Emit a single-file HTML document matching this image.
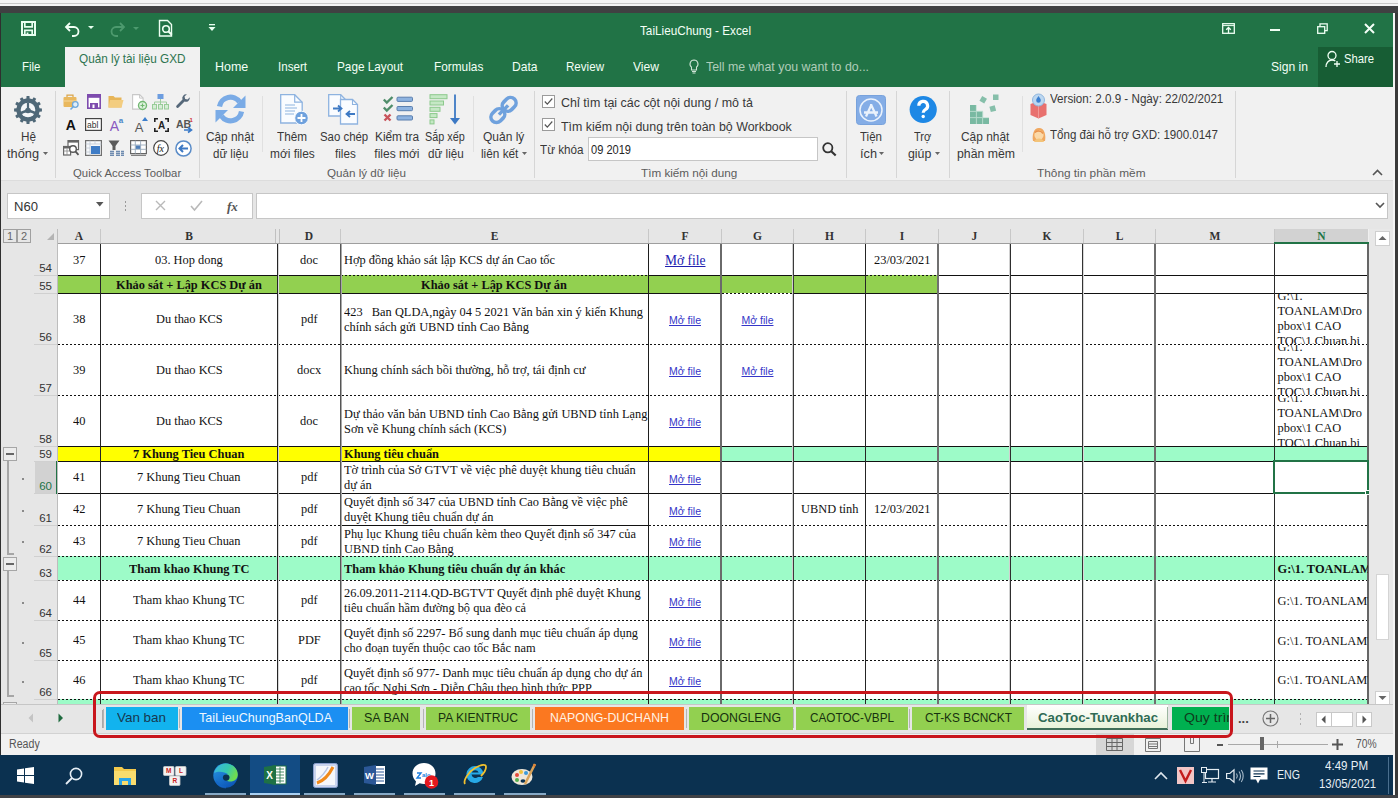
<!DOCTYPE html>
<html><head><meta charset="utf-8">
<style>
*{margin:0;padding:0;box-sizing:border-box}
html,body{width:1398px;height:798px;overflow:hidden;background:#f0f0f0;position:relative;font-family:"Liberation Sans",sans-serif}
.a{position:absolute}
.t{position:absolute;white-space:nowrap;line-height:1}
svg.a{overflow:visible}
</style></head><body>
<div class="a" style="left:0px;top:0px;width:1398px;height:6px;background:#f4f4f4;"></div>
<div class="a" style="left:0px;top:3px;width:1398px;height:1px;background:#c8c8c8;"></div>
<div class="a" style="left:0px;top:6px;width:1398px;height:7px;background:#404042;"></div>
<div class="a" style="left:1393px;top:13px;width:2px;height:785px;background:#f4f4f4;"></div>
<div class="a" style="left:1395px;top:13px;width:3px;height:785px;background:#3a3a3a;"></div>
<div class="a" style="left:1px;top:13px;width:1392px;height:74px;background:#217346;"></div>
<div class="a" style="left:0px;top:13px;width:1px;height:745px;background:#2f2f2f;"></div>
<div class="a" style="left:1318px;top:47px;width:75px;height:40px;background:#175d34;"></div>
<div class="a" style="left:1px;top:87px;width:1392px;height:94px;background:#f1f1f1;"></div>
<div class="a" style="left:1px;top:181px;width:1392px;height:48px;background:#e6e6e6;"></div>
<div class="a" style="left:1px;top:180px;width:1392px;height:1px;background:#dcdcdc;"></div>
<div class="t" style="left:640.40px;top:23.50px;font-size:13px;font-family:'Liberation Sans',sans-serif;color:#f4fff6;transform:scaleX(0.9036);transform-origin:0 0;">TaiLieuChung - Excel</div>
<svg class="a" style="left:21px;top:21px;" width="15" height="15" viewBox="0 0 15 15"><path d="M1 1h13v13H1z" fill="none" stroke="#e8fff0" stroke-width="2"/><path d="M3.8 1.5v4.3h7.4V1.5" fill="none" stroke="#e8fff0" stroke-width="1.7"/><path d="M3.8 14V9.3h7.4V14" fill="none" stroke="#e8fff0" stroke-width="1.7"/><rect x="5.6" y="11.5" width="1.8" height="2.5" fill="#e8fff0"/></svg>
<svg class="a" style="left:64px;top:20px;" width="17" height="17" viewBox="0 0 17 17"><path d="M6 3L2 7l4 4" fill="none" stroke="#f0fff4" stroke-width="1.8"/><path d="M2.5 7H10a4.5 4.5 0 0 1 0 9H8" fill="none" stroke="#f0fff4" stroke-width="1.8"/></svg>
<svg class="a" style="left:88px;top:26px;" width="6" height="4" viewBox="0 0 6 4"><path d="M0 0h6L3 3z" fill="#e8fff0"/></svg>
<svg class="a" style="left:109px;top:20px;" width="17" height="17" viewBox="0 0 17 17"><path d="M11 3l4 4-4 4" fill="none" stroke="#4d9a6e" stroke-width="1.8"/><path d="M14.5 7H7a4.5 4.5 0 0 0 0 9h2" fill="none" stroke="#4d9a6e" stroke-width="1.8"/></svg>
<svg class="a" style="left:133px;top:27px;" width="6" height="2" viewBox="0 0 6 2"><path d="M0 0h6L3 3z" fill="#4d9a6e"/></svg>
<svg class="a" style="left:158px;top:19px;" width="16" height="19" viewBox="0 0 16 19"><path d="M1.5 1.5h8l4 4V17h-12z" fill="none" stroke="#eefff3" stroke-width="1.4"/><circle cx="8" cy="10" r="3.3" fill="none" stroke="#eefff3" stroke-width="1.6"/><path d="M10.3 12.3l3.5 3.5" stroke="#eefff3" stroke-width="2"/></svg>
<svg class="a" style="left:208px;top:24px;" width="8" height="8" viewBox="0 0 8 8"><rect x="1" y="0" width="6" height="1.3" fill="#e8fff0"/><path d="M0.5 3h7L4 7z" fill="#e8fff0"/></svg>
<svg class="a" style="left:1222px;top:23px;" width="13" height="11" viewBox="0 0 13 11"><rect x="0.7" y="0.7" width="11.6" height="9.6" fill="none" stroke="#eefff3" stroke-width="1.3"/><path d="M1 2.6h11" stroke="#eefff3" stroke-width="1"/><path d="M6.5 10V4.5M4.2 6.8L6.5 4.5l2.3 2.3" fill="none" stroke="#eefff3" stroke-width="1.3"/></svg>
<div class="a" style="left:1270px;top:29px;width:10px;height:2px;background:#f0fff4;"></div>
<svg class="a" style="left:1317px;top:23px;" width="11" height="11" viewBox="0 0 11 11"><rect x="0.7" y="3.7" width="7" height="6.6" fill="none" stroke="#eefff3" stroke-width="1.3"/><path d="M3 3.5V0.8h7.2v6.8H8" fill="none" stroke="#eefff3" stroke-width="1.3"/></svg>
<svg class="a" style="left:1364px;top:23px;" width="11" height="10" viewBox="0 0 11 10"><path d="M1 1l9 9M10 1l-9 9" stroke="#f4fff7" stroke-width="2"/></svg>
<div class="a" style="left:65px;top:47px;width:135px;height:40px;background:#f1f1f1;"></div>
<div class="t" style="left:21.50px;top:59.80px;font-size:13px;font-family:'Liberation Sans',sans-serif;color:#f2fff5;transform:scaleX(0.8832);transform-origin:0 0;">File</div>
<div class="t" style="left:78.60px;top:51.70px;font-size:13px;font-family:'Liberation Sans',sans-serif;color:#2e7550;transform:scaleX(0.9043);transform-origin:0 0;">Quản lý tài liệu GXD</div>
<div class="t" style="left:215.00px;top:59.60px;font-size:13px;font-family:'Liberation Sans',sans-serif;color:#f2fff5;transform:scaleX(0.9603);transform-origin:0 0;">Home</div>
<div class="t" style="left:278.30px;top:59.60px;font-size:13px;font-family:'Liberation Sans',sans-serif;color:#f2fff5;transform:scaleX(0.8920);transform-origin:0 0;">Insert</div>
<div class="t" style="left:337.30px;top:59.60px;font-size:13px;font-family:'Liberation Sans',sans-serif;color:#f2fff5;transform:scaleX(0.9055);transform-origin:0 0;">Page Layout</div>
<div class="t" style="left:433.50px;top:59.60px;font-size:13px;font-family:'Liberation Sans',sans-serif;color:#f2fff5;transform:scaleX(0.9100);transform-origin:0 0;">Formulas</div>
<div class="t" style="left:512.00px;top:59.60px;font-size:13px;font-family:'Liberation Sans',sans-serif;color:#f2fff5;transform:scaleX(0.9287);transform-origin:0 0;">Data</div>
<div class="t" style="left:566.00px;top:59.60px;font-size:13px;font-family:'Liberation Sans',sans-serif;color:#f2fff5;transform:scaleX(0.8915);transform-origin:0 0;">Review</div>
<div class="t" style="left:633.00px;top:59.60px;font-size:13px;font-family:'Liberation Sans',sans-serif;color:#f2fff5;transform:scaleX(0.9305);transform-origin:0 0;">View</div>
<svg class="a" style="left:689px;top:59px;" width="10" height="16" viewBox="0 0 10 16"><path d="M5 1a4 4 0 0 0-2.5 7.1V11h5V8.1A4 4 0 0 0 5 1z" fill="none" stroke="#cfe4d6" stroke-width="1.1"/><path d="M3 12.5h4M3.5 14h3" stroke="#cfe4d6" stroke-width="1"/></svg>
<div class="t" style="left:706.00px;top:59.60px;font-size:13px;font-family:'Liberation Sans',sans-serif;color:#afcdb9;transform:scaleX(0.9519);transform-origin:0 0;">Tell me what you want to do...</div>
<div class="t" style="left:1271.00px;top:60.00px;font-size:13px;font-family:'Liberation Sans',sans-serif;color:#f2fff5;transform:scaleX(0.9309);transform-origin:0 0;">Sign in</div>
<svg class="a" style="left:1325px;top:50px;" width="16" height="18" viewBox="0 0 16 18"><circle cx="7" cy="5.5" r="4" fill="none" stroke="#f0fff4" stroke-width="1.3"/><path d="M1 17c0-4 2.5-7 6-7 1.5 0 2.5.4 3.3 1" fill="none" stroke="#f0fff4" stroke-width="1.3"/><path d="M12 11v6M9 14h6" stroke="#f0fff4" stroke-width="1.3"/></svg>
<div class="t" style="left:1344.00px;top:52.00px;font-size:13px;font-family:'Liberation Sans',sans-serif;color:#f2fff5;transform:scaleX(0.8649);transform-origin:0 0;">Share</div>
<div class="a" style="left:55px;top:91px;width:1px;height:87px;background:#d6d6d6;"></div>
<div class="a" style="left:199px;top:91px;width:1px;height:87px;background:#d6d6d6;"></div>
<div class="a" style="left:534px;top:91px;width:1px;height:87px;background:#d6d6d6;"></div>
<div class="a" style="left:846px;top:91px;width:1px;height:87px;background:#d6d6d6;"></div>
<div class="a" style="left:896px;top:91px;width:1px;height:87px;background:#d6d6d6;"></div>
<div class="a" style="left:949px;top:91px;width:1px;height:87px;background:#d6d6d6;"></div>
<div class="a" style="left:1235px;top:91px;width:1px;height:87px;background:#d6d6d6;"></div>
<div class="a" style="left:262px;top:96px;width:1px;height:56px;background:#e0e0e0;"></div>
<div class="a" style="left:473px;top:96px;width:1px;height:56px;background:#e0e0e0;"></div>
<div class="a" style="left:1022px;top:96px;width:1px;height:56px;background:#e0e0e0;"></div>
<div class="t" style="left:20.70px;top:131.44px;font-size:12px;font-family:'Liberation Sans',sans-serif;color:#383838;transform:scaleX(0.9779);transform-origin:0 0;">Hệ</div>
<div class="t" style="left:7.40px;top:147.84px;font-size:12px;font-family:'Liberation Sans',sans-serif;color:#383838;transform:scaleX(1.0657);transform-origin:0 0;">thống</div>
<svg class="a" style="left:43px;top:152px;" width="6" height="4" viewBox="0 0 6 4"><path d="M0 0h5L2.5 3z" fill="#666"/></svg>
<div class="t" style="left:73.20px;top:168.29px;font-size:11px;font-family:'Liberation Sans',sans-serif;color:#5c5c5c;transform:scaleX(1.0309);transform-origin:0 0;">Quick Access Toolbar</div>
<div class="t" style="left:206.40px;top:131.44px;font-size:12px;font-family:'Liberation Sans',sans-serif;color:#383838;transform:scaleX(0.9856);transform-origin:0 0;">Cập nhật</div>
<div class="t" style="left:212.90px;top:147.84px;font-size:12px;font-family:'Liberation Sans',sans-serif;color:#383838;transform:scaleX(0.9614);transform-origin:0 0;">dữ liệu</div>
<div class="t" style="left:277.30px;top:131.44px;font-size:12px;font-family:'Liberation Sans',sans-serif;color:#383838;transform:scaleX(0.9781);transform-origin:0 0;">Thêm</div>
<div class="t" style="left:269.70px;top:147.84px;font-size:12px;font-family:'Liberation Sans',sans-serif;color:#383838;transform:scaleX(0.9911);transform-origin:0 0;">mới files</div>
<div class="t" style="left:320.20px;top:131.44px;font-size:12px;font-family:'Liberation Sans',sans-serif;color:#383838;transform:scaleX(0.9506);transform-origin:0 0;">Sao chép</div>
<div class="t" style="left:334.50px;top:147.84px;font-size:12px;font-family:'Liberation Sans',sans-serif;color:#383838;transform:scaleX(0.9700);transform-origin:0 0;">files</div>
<div class="t" style="left:375.30px;top:131.44px;font-size:12px;font-family:'Liberation Sans',sans-serif;color:#383838;transform:scaleX(0.9871);transform-origin:0 0;">Kiểm tra</div>
<div class="t" style="left:374.30px;top:147.84px;font-size:12px;font-family:'Liberation Sans',sans-serif;color:#383838;">files mới</div>
<div class="t" style="left:425.40px;top:131.44px;font-size:12px;font-family:'Liberation Sans',sans-serif;color:#383838;transform:scaleX(0.9016);transform-origin:0 0;">Sắp xếp</div>
<div class="t" style="left:427.70px;top:147.84px;font-size:12px;font-family:'Liberation Sans',sans-serif;color:#383838;transform:scaleX(0.9723);transform-origin:0 0;">dữ liệu</div>
<div class="t" style="left:483.00px;top:131.44px;font-size:12px;font-family:'Liberation Sans',sans-serif;color:#383838;">Quản lý</div>
<div class="t" style="left:480.60px;top:147.84px;font-size:12px;font-family:'Liberation Sans',sans-serif;color:#383838;transform:scaleX(0.9837);transform-origin:0 0;">liên kết</div>
<svg class="a" style="left:522px;top:152px;" width="6" height="4" viewBox="0 0 6 4"><path d="M0 0h5L2.5 3z" fill="#666"/></svg>
<div class="t" style="left:327.00px;top:168.29px;font-size:11px;font-family:'Liberation Sans',sans-serif;color:#5c5c5c;transform:scaleX(1.0587);transform-origin:0 0;">Quản lý dữ liệu</div>
<div class="a" style="left:542px;top:95px;width:13px;height:13px;background:#fff;border:1px solid #9b9b9b"></div>
<svg class="a" style="left:544px;top:97px;" width="9" height="9" viewBox="0 0 9 9"><path d="M0.8 4.5l2.5 2.6L8.3 1.5" fill="none" stroke="#555" stroke-width="1.2"/></svg>
<div class="a" style="left:542px;top:118px;width:13px;height:13px;background:#fff;border:1px solid #9b9b9b"></div>
<svg class="a" style="left:544px;top:120px;" width="9" height="9" viewBox="0 0 9 9"><path d="M0.8 4.5l2.5 2.6L8.3 1.5" fill="none" stroke="#555" stroke-width="1.2"/></svg>
<div class="t" style="left:560.80px;top:97.14px;font-size:12px;font-family:'Liberation Sans',sans-serif;color:#383838;transform:scaleX(1.0382);transform-origin:0 0;">Chỉ tìm tại các cột nội dung / mô tả</div>
<div class="t" style="left:560.80px;top:120.74px;font-size:12px;font-family:'Liberation Sans',sans-serif;color:#383838;transform:scaleX(1.0340);transform-origin:0 0;">Tìm kiếm nội dung trên toàn bộ Workbook</div>
<div class="t" style="left:539.70px;top:143.54px;font-size:12px;font-family:'Liberation Sans',sans-serif;color:#383838;transform:scaleX(0.9728);transform-origin:0 0;">Từ khóa</div>
<div class="a" style="left:588px;top:137px;width:230px;height:24px;background:#fff;border:1px solid #c6c6c6"></div>
<div class="t" style="left:590.80px;top:143.54px;font-size:12px;font-family:'Liberation Sans',sans-serif;color:#262626;transform:scaleX(0.9222);transform-origin:0 0;">09 2019</div>
<svg class="a" style="left:822px;top:142px;" width="15" height="14" viewBox="0 0 15 14"><circle cx="5.8" cy="5.8" r="4.6" fill="none" stroke="#333" stroke-width="1.8"/><path d="M9.2 9.2l4.5 4.3" stroke="#333" stroke-width="2.2"/></svg>
<div class="t" style="left:641.30px;top:168.29px;font-size:11px;font-family:'Liberation Sans',sans-serif;color:#5c5c5c;transform:scaleX(1.0633);transform-origin:0 0;">Tìm kiếm nội dung</div>
<div class="t" style="left:860.00px;top:131.44px;font-size:12px;font-family:'Liberation Sans',sans-serif;color:#383838;transform:scaleX(0.9608);transform-origin:0 0;">Tiện</div>
<div class="t" style="left:859.50px;top:147.84px;font-size:12px;font-family:'Liberation Sans',sans-serif;color:#383838;transform:scaleX(1.0620);transform-origin:0 0;">ích</div>
<svg class="a" style="left:879px;top:152px;" width="6" height="4" viewBox="0 0 6 4"><path d="M0 0h5L2.5 3z" fill="#666"/></svg>
<div class="t" style="left:914.30px;top:131.44px;font-size:12px;font-family:'Liberation Sans',sans-serif;color:#383838;transform:scaleX(0.9173);transform-origin:0 0;">Trợ</div>
<div class="t" style="left:907.50px;top:147.84px;font-size:12px;font-family:'Liberation Sans',sans-serif;color:#383838;transform:scaleX(1.0271);transform-origin:0 0;">giúp</div>
<svg class="a" style="left:935px;top:152px;" width="6" height="4" viewBox="0 0 6 4"><path d="M0 0h5L2.5 3z" fill="#666"/></svg>
<div class="t" style="left:961.20px;top:131.44px;font-size:12px;font-family:'Liberation Sans',sans-serif;color:#383838;transform:scaleX(0.9918);transform-origin:0 0;">Cập nhật</div>
<div class="t" style="left:956.50px;top:147.84px;font-size:12px;font-family:'Liberation Sans',sans-serif;color:#383838;transform:scaleX(1.0231);transform-origin:0 0;">phần mềm</div>
<div class="t" style="left:1049.50px;top:93.44px;font-size:12px;font-family:'Liberation Sans',sans-serif;color:#383838;transform:scaleX(0.9694);transform-origin:0 0;">Version: 2.0.9 - Ngày: 22/02/2021</div>
<div class="t" style="left:1049.50px;top:128.64px;font-size:12px;font-family:'Liberation Sans',sans-serif;color:#383838;transform:scaleX(0.9615);transform-origin:0 0;">Tổng đài hỗ trợ GXD: 1900.0147</div>
<div class="t" style="left:1037.40px;top:168.29px;font-size:11px;font-family:'Liberation Sans',sans-serif;color:#5c5c5c;transform:scaleX(1.0755);transform-origin:0 0;">Thông tin phần mềm</div>
<svg class="a" style="left:1372px;top:169px;" width="11" height="7" viewBox="0 0 11 7"><path d="M1 6l4.5-4.5L10 6" fill="none" stroke="#555" stroke-width="1.6"/></svg>
<svg class="a" style="left:12.5px;top:94.5px;" width="30" height="30" viewBox="0 0 30 30"><polygon points="12.00,3.80 13.37,3.52 13.54,1.08 16.46,1.08 16.63,3.52 18.00,3.80 19.33,4.24 20.69,2.21 23.23,3.67 22.16,5.87 23.20,6.80 24.13,7.84 26.33,6.77 27.79,9.31 25.76,10.67 26.20,12.00 26.48,13.37 28.92,13.54 28.92,16.46 26.48,16.63 26.20,18.00 25.76,19.33 27.79,20.69 26.33,23.23 24.13,22.16 23.20,23.20 22.16,24.13 23.23,26.33 20.69,27.79 19.33,25.76 18.00,26.20 16.63,26.48 16.46,28.92 13.54,28.92 13.37,26.48 12.00,26.20 10.67,25.76 9.31,27.79 6.77,26.33 7.84,24.13 6.80,23.20 5.87,22.16 3.67,23.23 2.21,20.69 4.24,19.33 3.80,18.00 3.52,16.63 1.08,16.46 1.08,13.54 3.52,13.37 3.80,12.00 4.24,10.67 2.21,9.31 3.67,6.77 5.87,7.84 6.80,6.80 7.84,5.87 6.77,3.67 9.31,2.21 10.67,4.24" fill="#4f6878"/><circle cx="15" cy="15" r="7.3" fill="#f4f6f8"/><path d="M15 15L15 7.5M15 15L7.8 17.8M15 15L22.2 17.8" stroke="#4f6878" stroke-width="2.2"/><circle cx="15" cy="15.5" r="2.8" fill="#4f6878"/><path d="M8 18.5Q15 14.5 22 18.5" fill="none" stroke="#4f6878" stroke-width="1.6"/></svg>
<svg class="a" style="left:63px;top:94px;" width="17" height="16" viewBox="0 0 17 16"><rect x="0.5" y="3" width="13" height="10" rx="1" fill="#e9b85e"/><path d="M4 3V1.2h6V3" fill="none" stroke="#d9a448" stroke-width="1.2"/><path d="M0.5 7h13" stroke="#f6d89c" stroke-width="1"/><circle cx="12.3" cy="10.5" r="2.8" fill="#dfeefa" stroke="#6fa8dc" stroke-width="1.3"/><path d="M10.4 12.5L7.5 15.5" stroke="#6fa8dc" stroke-width="1.6"/></svg>
<svg class="a" style="left:87px;top:94px;" width="14" height="15" viewBox="0 0 14 15"><rect x="0.8" y="0.8" width="12.4" height="13.4" fill="#fff" stroke="#7e4cae" stroke-width="1.6"/><rect x="0.8" y="0.8" width="12.4" height="3" fill="#7e4cae"/><rect x="3" y="9" width="8" height="5" fill="#7e4cae"/><rect x="5.5" y="10.5" width="2" height="3.5" fill="#fff"/></svg>
<svg class="a" style="left:108px;top:95px;" width="16" height="13" viewBox="0 0 16 13"><path d="M0.5 1h5l1.5 1.5h6.5v10H0.5z" fill="#e7b558"/><path d="M2 5h13.5l-2 7.5H0.5z" fill="#f3cd80"/></svg>
<div class="t" style="left:65.64px;top:118.35px;font-size:14px;font-family:'Liberation Sans',sans-serif;color:#111;font-weight:700;">A</div>
<svg class="a" style="left:85px;top:118px;" width="17" height="13" viewBox="0 0 17 13"><rect x="0.6" y="0.6" width="15.8" height="11.8" fill="#fff" stroke="#444" stroke-width="1.2"/><text x="2" y="9.5" font-size="8.5" fill="#333" font-family="Liberation Sans">abl</text></svg>
<div class="t" style="left:109.63px;top:119.15px;font-size:14px;font-family:'Liberation Sans',sans-serif;color:#8a58c0;">A</div>
<div class="t" style="left:118.78px;top:117.23px;font-size:8px;font-family:'Liberation Sans',sans-serif;color:#4a86c8;font-weight:700;">a</div>
<svg class="a" style="left:63px;top:140px;" width="17" height="16" viewBox="0 0 17 16"><rect x="5" y="0.6" width="10.5" height="9" fill="#fff" stroke="#666" stroke-width="1.2"/><rect x="5" y="0.6" width="10.5" height="2" fill="#666"/><rect x="0.6" y="6.5" width="7" height="8.5" fill="#fff" stroke="#666" stroke-width="1.2"/><rect x="0.6" y="6.5" width="7" height="2" fill="#666"/><path d="M0.6 11h7M4 8.5v6.5" stroke="#888" stroke-width="0.8"/><circle cx="10" cy="9" r="3.3" fill="#fff" stroke="#555" stroke-width="1.4"/><path d="M12.4 11.4L15.5 14.8" stroke="#555" stroke-width="1.8"/></svg>
<svg class="a" style="left:85px;top:140px;" width="17" height="16" viewBox="0 0 17 16"><rect x="0.6" y="0.6" width="15.8" height="14.8" fill="#f6f8fb" stroke="#707070" stroke-width="1.2"/><path d="M0.6 4h15.8M5 0.6v14.8M0.6 8h4.4M0.6 12h4.4M10 0.6v3.4" stroke="#c0c8d4" stroke-width="0.8"/><rect x="6" y="6" width="9" height="8" fill="#3e7cc6"/></svg>
<svg class="a" style="left:108px;top:140px;" width="16" height="16" viewBox="0 0 16 16"><path d="M0.5 0.5h11L7.5 6v4h-3V6z" fill="#5b5b5b"/><path d="M2 11.5h4M8 11.5h4M13 11.5h3M2 13.5h4M8 13.5h4M13 13.5h3M2 15.3h4M8 15.3h4M13 15.3h3" stroke="#6e8bb0" stroke-width="1.3"/></svg>
<svg class="a" style="left:132px;top:94px;" width="15" height="16" viewBox="0 0 15 16"><path d="M0.6 0.6h7l3.5 3.5v11H0.6z" fill="#fff" stroke="#c8c8c8" stroke-width="1.1"/><path d="M7.6 0.6v3.5h3.5" fill="none" stroke="#c8c8c8" stroke-width="1"/><circle cx="10.5" cy="11.5" r="4" fill="#dff2df" stroke="#72b872" stroke-width="1.4"/><path d="M8.5 11.5h4M10.5 9.5v4" stroke="#72b872" stroke-width="1.2"/></svg>
<svg class="a" style="left:152px;top:94px;" width="17" height="16" viewBox="0 0 17 16"><rect x="5.5" y="0" width="6" height="5" fill="#6d9de0"/><path d="M8.5 5v3M2.5 8h12M2.5 8v3M8.5 8v3M14.5 8v3" stroke="#9fce9f" stroke-width="1"/><rect x="0.5" y="10.5" width="4" height="4.5" fill="#d6edd6" stroke="#98cc98"/><rect x="6.5" y="10.5" width="4" height="4.5" fill="#d6edd6" stroke="#98cc98"/><rect x="12.5" y="10.5" width="4" height="4.5" fill="#d6edd6" stroke="#98cc98"/></svg>
<svg class="a" style="left:176px;top:94px;" width="15" height="15" viewBox="0 0 15 15"><path d="M13.8 3.2a4 4 0 0 1-5.3 4.4L2.6 13.5a1.4 1.4 0 0 1-2-2L6.5 5.6A4 4 0 0 1 10.9 0.3L8.5 2.6l0.7 2.3 2.3 0.7z" fill="#56687a"/></svg>
<div class="t" style="left:134.66px;top:120.50px;font-size:13px;font-family:'Liberation Sans',sans-serif;color:#555;">A</div>
<svg class="a" style="left:142px;top:117px;" width="6" height="4" viewBox="0 0 6 4"><path d="M0 4L3 0l3 4z" fill="#3d7fcc"/></svg>
<svg class="a" style="left:154px;top:118px;" width="15" height="14" viewBox="0 0 15 14"><path d="M0.8 4V0.8H4M11 0.8h3.2V4M14.2 10v3.2H11M4 13.2H0.8V10" fill="none" stroke="#222" stroke-width="1.6"/></svg>
<div class="t" style="left:157.89px;top:120.53px;font-size:10px;font-family:'Liberation Sans',sans-serif;color:#222;font-weight:700;">A</div>
<div class="t" style="left:176.00px;top:119.11px;font-size:10.5px;font-family:'Liberation Sans',sans-serif;color:#555;font-weight:700;">AB</div>
<div class="t" style="left:189.50px;top:116.92px;font-size:6px;font-family:'Liberation Sans',sans-serif;color:#d03030;font-weight:700;">1</div>
<svg class="a" style="left:184px;top:127px;" width="9" height="6" viewBox="0 0 9 6"><path d="M0 3h6M4 0.5L7.5 3 4 5.5" fill="none" stroke="#3a7ac8" stroke-width="1.6"/></svg>
<svg class="a" style="left:130px;top:140px;" width="17" height="16" viewBox="0 0 17 16"><rect x="0.6" y="0.6" width="15.8" height="13" fill="#fff" stroke="#666" stroke-width="1.2"/><path d="M0.6 5h15.8M0.6 9.3h15.8M5.3 0.6v13M10.6 0.6v13" stroke="#9ab" stroke-width="0.9"/><rect x="5.8" y="5.5" width="4.4" height="3.4" fill="#4f7fb8"/><path d="M1 15.3h15" stroke="#666" stroke-width="1"/></svg>
<svg class="a" style="left:153px;top:140px;" width="16" height="16" viewBox="0 0 16 16"><circle cx="8" cy="8" r="7.3" fill="#fff" stroke="#444" stroke-width="1.2"/></svg>
<div class="t" style="left:156.84px;top:143.62px;font-size:10px;font-family:'Liberation Serif',serif;color:#222;font-style:italic;">fx</div>
<svg class="a" style="left:175px;top:140px;" width="17" height="17" viewBox="0 0 17 17"><circle cx="8.5" cy="8.5" r="7.6" fill="#fff" stroke="#5a8cc8" stroke-width="1.5"/><path d="M13 8.5H5M8 5L4.5 8.5 8 12" fill="none" stroke="#3d79c4" stroke-width="2"/></svg>
<svg class="a" style="left:214px;top:93px;" width="33" height="32" viewBox="0 0 33 32"><path d="M5.5 13.5A11 11 0 0 1 25.5 9" fill="none" stroke="#7aabe6" stroke-width="5.2"/><path d="M31.5 2.5v12.5H19z" fill="#7aabe6"/><path d="M27.5 18.5A11 11 0 0 1 7.5 23" fill="none" stroke="#7aabe6" stroke-width="5.2"/><path d="M1.5 29.5V17h12.5z" fill="#7aabe6"/></svg>
<svg class="a" style="left:280px;top:94px;" width="26" height="31" viewBox="0 0 26 31"><path d="M0.7 0.7h14l7.5 7.5V29H0.7z" fill="#fafcff" stroke="#8eb3e0" stroke-width="1.3"/><path d="M14.7 0.7v7.5h7.5" fill="none" stroke="#8eb3e0" stroke-width="1.2"/><path d="M5 11h10M5 14h12M5 17h10M5 20h9" stroke="#8eb3e0" stroke-width="1.1"/><circle cx="21.5" cy="24" r="6.8" fill="#6fa1dd" stroke="#fafcff" stroke-width="1"/><path d="M17.5 24h8M21.5 20v8" stroke="#fff" stroke-width="1.8"/></svg>
<svg class="a" style="left:328px;top:94px;" width="33" height="31" viewBox="0 0 33 31"><path d="M0.7 0.7h12l5 5V22H0.7z" fill="#fafcff" stroke="#8eb3e0" stroke-width="1.3"/><path d="M12.7 0.7v5h5" fill="none" stroke="#8eb3e0" stroke-width="1.1"/><path d="M12.5 5.5h12l5 5V30H12.5z" fill="#fafcff" stroke="#8eb3e0" stroke-width="1.3"/><path d="M24.5 5.5v5h5" fill="none" stroke="#8eb3e0" stroke-width="1.1"/><path d="M5 14.5h8M10 11.5l3.5 3-3.5 3" fill="none" stroke="#3d79c4" stroke-width="1.8"/><path d="M27 20h-8M22 17l-3.5 3 3.5 3" fill="none" stroke="#3d79c4" stroke-width="1.8"/></svg>
<svg class="a" style="left:383px;top:96px;" width="31" height="26" viewBox="0 0 31 26"><path d="M0.8 3.5l3 3 5.7-5.5" fill="none" stroke="#4f8d6a" stroke-width="2.4"/><path d="M0.8 11.5l3 3 5.7-5.5" fill="none" stroke="#4f8d6a" stroke-width="2.4"/><path d="M1.5 18.5l6 6M7.5 18.5l-6 6" stroke="#c9545c" stroke-width="2.4"/><rect x="14" y="1.2" width="15.5" height="4.2" rx="1" fill="#8eb3e0" stroke="#5b7fae" stroke-width="1"/><rect x="14" y="10.5" width="15.5" height="4.2" rx="1" fill="#8eb3e0" stroke="#5b7fae" stroke-width="1"/><rect x="14" y="19.8" width="15.5" height="4.2" rx="1" fill="#8eb3e0" stroke="#5b7fae" stroke-width="1"/></svg>
<svg class="a" style="left:429px;top:94px;" width="30" height="31" viewBox="0 0 30 31"><rect x="1" y="0.7" width="17" height="4" fill="#c5e8c5" stroke="#8cc98c" stroke-width="1"/><rect x="1" y="7" width="13.5" height="4" fill="#c5e8c5" stroke="#8cc98c" stroke-width="1"/><rect x="1" y="13.3" width="10" height="4" fill="#c5e8c5" stroke="#8cc98c" stroke-width="1"/><rect x="1" y="19.6" width="7" height="4" fill="#c5e8c5" stroke="#8cc98c" stroke-width="1"/><rect x="1" y="25.9" width="4" height="4" fill="#c5e8c5" stroke="#8cc98c" stroke-width="1"/><path d="M26 0.5v26" stroke="#3d79c4" stroke-width="1.8"/><path d="M21 24l5 6.5 5-6.5z" fill="#3d79c4"/></svg>
<svg class="a" style="left:487px;top:94px;" width="33" height="32" viewBox="0 0 33 32"><g transform="rotate(-45 16.5 16)"><rect x="1" y="10.5" width="15" height="11" rx="5.5" fill="none" stroke="#6fa1dd" stroke-width="3.6"/><rect x="17" y="10.5" width="15" height="11" rx="5.5" fill="none" stroke="#6fa1dd" stroke-width="3.6"/><path d="M10 16h13" stroke="#6fa1dd" stroke-width="3.4"/></g></svg>
<svg class="a" style="left:856px;top:95px;" width="30" height="30" viewBox="0 0 30 30"><rect x="0.5" y="0.5" width="29" height="29" rx="3" fill="#84ade6" stroke="#78a2dc" stroke-width="1"/><circle cx="15" cy="15" r="11" fill="none" stroke="#eaf2fc" stroke-width="1.5"/><path d="M10 21.5L15.5 9.5M20.5 21.5L15 9.5M8 17.5h14" stroke="#eaf2fc" stroke-width="2.3"/></svg>
<svg class="a" style="left:909px;top:95px;" width="29" height="29" viewBox="0 0 29 29"><circle cx="14.2" cy="14.5" r="13.6" fill="#1e88e5"/><path d="M9.8 10.8a4.4 4.4 0 1 1 6.5 3.8c-1.5.9-2.1 1.5-2.1 3.2" fill="none" stroke="#fff" stroke-width="3.2"/><circle cx="14.2" cy="21.5" r="1.7" fill="#fff"/></svg>
<svg class="a" style="left:969px;top:94px;" width="32" height="31" viewBox="0 0 32 31"><g fill="#79b9a2"><rect x="1" y="11" width="6" height="6"/><rect x="1" y="17.5" width="6" height="6"/><rect x="1" y="24" width="6" height="6"/><rect x="7.5" y="17.5" width="6" height="6"/><rect x="7.5" y="24" width="6" height="6"/><rect x="14" y="24" width="6" height="6"/><rect x="7.5" y="11" width="6" height="6" opacity="0"/></g><g fill="#86bfaa"><rect x="11.5" y="3" width="5.5" height="5.5" transform="rotate(30 14.2 5.7)"/><rect x="24" y="0.5" width="5.5" height="5.5"/><rect x="21" y="12" width="5.5" height="5.5" transform="rotate(-15 23.7 14.7)"/></g><path d="M1 17.25h13M1 23.75h19M7.25 11v19M13.75 17.5v12.5" stroke="#a9d6c6" stroke-width="0.6"/></svg>
<svg class="a" style="left:1030px;top:93px;" width="17" height="26" viewBox="0 0 17 26"><path d="M0.5 11l8 -3 8 3v11l-8 3.5-8-3.5z" fill="#e8706e"/><path d="M8.5 8v17.5" stroke="#f3a29f" stroke-width="0.8"/><circle cx="8.5" cy="7" r="6" fill="#bcd7f0" stroke="#8fb6de" stroke-width="1"/><path d="M8.5 3c-1.5 2-2.3 3.3-2.3 4.5a2.3 2.3 0 0 0 4.6 0c0-1.2-.8-2.5-2.3-4.5z" fill="#3b7fd0"/></svg>
<svg class="a" style="left:1031px;top:126px;" width="16" height="17" viewBox="0 0 16 17"><path d="M2 15c-1-5 0-13 6-13s7 8 6 13z" fill="#f0a860"/><circle cx="8" cy="9" r="4.6" fill="#fbd9a8"/><path d="M3 16c1-3 3-3.5 5-3.5s4 .5 5 3.5z" fill="#f3c47a"/><path d="M4 6.5c2-2 6-2 8 1" fill="none" stroke="#e8904a" stroke-width="1.5"/></svg>
<div class="a" style="left:7px;top:193px;width:103px;height:26px;background:#fff;border:1px solid #c6c6c6"></div>
<div class="t" style="left:13.60px;top:199.60px;font-size:13px;font-family:'Liberation Sans',sans-serif;color:#333;transform:scaleX(1.0064);transform-origin:0 0;">N60</div>
<svg class="a" style="left:96px;top:202px;" width="8" height="5" viewBox="0 0 8 5"><path d="M0 0h7.5L3.75 4.5z" fill="#555"/></svg>
<div class="a" style="left:124.5px;top:201px;width:1.6px;height:1.6px;background:#9a9a9a;"></div>
<div class="a" style="left:124.5px;top:205px;width:1.6px;height:1.6px;background:#9a9a9a;"></div>
<div class="a" style="left:124.5px;top:209px;width:1.6px;height:1.6px;background:#9a9a9a;"></div>
<div class="a" style="left:141px;top:193px;width:112px;height:26px;background:#fff;border:1px solid #c6c6c6"></div>
<svg class="a" style="left:155px;top:200px;" width="11" height="11" viewBox="0 0 11 11"><path d="M1 1l9 9M10 1l-9 9" stroke="#b9b9b9" stroke-width="1.4"/></svg>
<svg class="a" style="left:190px;top:200px;" width="13" height="11" viewBox="0 0 13 11"><path d="M1 6l3.5 4L12 1" fill="none" stroke="#b9b9b9" stroke-width="1.6"/></svg>
<div class="t" style="left:227.00px;top:200.11px;font-size:13px;font-family:'Liberation Serif',serif;color:#555;font-style:italic;font-weight:700;">fx</div>
<div class="a" style="left:256px;top:193px;width:1132px;height:26px;background:#fff;border:1px solid #c6c6c6"></div>
<svg class="a" style="left:1375px;top:202px;" width="10" height="7" viewBox="0 0 10 7"><path d="M1 1l4 4 4-4" fill="none" stroke="#555" stroke-width="1.6"/></svg>
<div class="a" style="left:1px;top:229px;width:56px;height:476px;background:#e6e6e6;"></div>
<div class="a" style="left:57px;top:244px;width:1311px;height:461px;background:#ffffff;"></div>
<div class="a" style="left:57px;top:229px;width:1311px;height:15px;background:#e6e6e6;"></div>
<div class="a" style="left:57px;top:275px;width:881px;height:18px;background:#92d050;"></div>
<div class="a" style="left:57px;top:446px;width:664px;height:15px;background:#ffff00;"></div>
<div class="a" style="left:721px;top:446px;width:647px;height:15px;background:#9dfbc8;"></div>
<div class="a" style="left:57px;top:556px;width:1311px;height:24px;background:#9dfbc8;"></div>
<div class="a" style="left:57px;top:699px;width:1311px;height:6px;background:#9dfbc8;"></div>
<div class="a" style="left:57px;top:275px;width:284px;height:1px;background:#111;"></div>
<div class="a" style="left:340px;top:275px;width:309px;height:1px;background:repeating-linear-gradient(90deg,transparent 0 1px,#111 1px 3px,transparent 3px 4px);"></div>
<div class="a" style="left:648px;top:275px;width:218px;height:1px;background:#111;"></div>
<div class="a" style="left:865px;top:275px;width:74px;height:1px;background:repeating-linear-gradient(90deg,transparent 0 1px,#111 1px 3px,transparent 3px 4px);"></div>
<div class="a" style="left:938px;top:275px;width:431px;height:1px;background:#111;"></div>
<div class="a" style="left:57px;top:293px;width:665px;height:1px;background:#111;"></div>
<div class="a" style="left:721px;top:293px;width:73px;height:1px;background:repeating-linear-gradient(90deg,transparent 0 1px,#111 1px 3px,transparent 3px 4px);"></div>
<div class="a" style="left:793px;top:293px;width:576px;height:1px;background:#111;"></div>
<div class="a" style="left:57px;top:344px;width:1312px;height:1px;background:repeating-linear-gradient(90deg,transparent 0 1px,#111 1px 3px,transparent 3px 4px);"></div>
<div class="a" style="left:57px;top:395px;width:1312px;height:1px;background:repeating-linear-gradient(90deg,transparent 0 1px,#111 1px 3px,transparent 3px 4px);"></div>
<div class="a" style="left:57px;top:446px;width:1312px;height:1px;background:#111;"></div>
<div class="a" style="left:57px;top:461px;width:1312px;height:1px;background:#111;"></div>
<div class="a" style="left:57px;top:493px;width:1312px;height:1px;background:#111;"></div>
<div class="a" style="left:57px;top:525px;width:284px;height:1px;background:repeating-linear-gradient(90deg,transparent 0 1px,#111 1px 3px,transparent 3px 4px);"></div>
<div class="a" style="left:340px;top:525px;width:309px;height:1px;background:#111;"></div>
<div class="a" style="left:648px;top:525px;width:721px;height:1px;background:repeating-linear-gradient(90deg,transparent 0 1px,#111 1px 3px,transparent 3px 4px);"></div>
<div class="a" style="left:57px;top:556px;width:1312px;height:1px;background:repeating-linear-gradient(90deg,transparent 0 1px,#111 1px 3px,transparent 3px 4px);"></div>
<div class="a" style="left:57px;top:580px;width:1312px;height:1px;background:repeating-linear-gradient(90deg,transparent 0 1px,#111 1px 3px,transparent 3px 4px);"></div>
<div class="a" style="left:57px;top:620px;width:1312px;height:1px;background:repeating-linear-gradient(90deg,transparent 0 1px,#111 1px 3px,transparent 3px 4px);"></div>
<div class="a" style="left:57px;top:660px;width:1312px;height:1px;background:repeating-linear-gradient(90deg,transparent 0 1px,#111 1px 3px,transparent 3px 4px);"></div>
<div class="a" style="left:57px;top:699px;width:1312px;height:1px;background:repeating-linear-gradient(90deg,transparent 0 1px,#111 1px 3px,transparent 3px 4px);"></div>
<div class="a" style="left:100px;top:244px;width:1px;height:461px;background:#252525;"></div>
<div class="a" style="left:277px;top:244px;width:1px;height:461px;background:#252525;"></div>
<div class="a" style="left:278px;top:244px;width:1px;height:461px;background:#d8d8d8;"></div>
<div class="a" style="left:340px;top:244px;width:1px;height:461px;background:#555;"></div>
<div class="a" style="left:341px;top:244px;width:1px;height:461px;background:#a8a8a8;"></div>
<div class="a" style="left:648px;top:244px;width:1px;height:461px;background:#1e1e1e;"></div>
<div class="a" style="left:720px;top:244px;width:1px;height:461px;background:#6a6a6a;"></div>
<div class="a" style="left:721px;top:244px;width:1px;height:461px;background:#6a6a6a;"></div>
<div class="a" style="left:793px;top:244px;width:1px;height:461px;background:#3a3a3a;"></div>
<div class="a" style="left:792px;top:244px;width:1px;height:461px;background:#cfcfcf;"></div>
<div class="a" style="left:865px;top:244px;width:1px;height:461px;background:#252525;"></div>
<div class="a" style="left:937px;top:244px;width:1px;height:461px;background:#707070;"></div>
<div class="a" style="left:938px;top:244px;width:1px;height:461px;background:#707070;"></div>
<div class="a" style="left:1010px;top:244px;width:1px;height:461px;background:#2e2e2e;"></div>
<div class="a" style="left:1009px;top:244px;width:1px;height:461px;background:#d0d0d0;"></div>
<div class="a" style="left:1082px;top:244px;width:1px;height:461px;background:#333;"></div>
<div class="a" style="left:1083px;top:244px;width:1px;height:461px;background:#d8d8d8;"></div>
<div class="a" style="left:1154px;top:244px;width:1px;height:461px;background:#6e6e6e;"></div>
<div class="a" style="left:1155px;top:244px;width:1px;height:461px;background:#6e6e6e;"></div>
<div class="a" style="left:1274px;top:244px;width:1px;height:461px;background:#2a2a2a;"></div>
<div class="a" style="left:1367px;top:244px;width:1px;height:461px;background:#666;"></div>
<div class="a" style="left:1368px;top:244px;width:1px;height:461px;background:#666;"></div>
<div class="a" style="left:57px;top:243px;width:1311px;height:1px;background:#9e9e9e;"></div>
<div class="a" style="left:57px;top:229px;width:1px;height:14px;background:#c8c8c8;"></div>
<div class="t" style="left:74.85px;top:231.37px;font-size:11.5px;font-family:'Liberation Serif',serif;color:#333;font-weight:700;">A</div>
<div class="a" style="left:100px;top:229px;width:1px;height:14px;background:#c8c8c8;"></div>
<div class="t" style="left:185.16px;top:231.37px;font-size:11.5px;font-family:'Liberation Serif',serif;color:#333;font-weight:700;">B</div>
<div class="a" style="left:275px;top:229px;width:1px;height:14px;background:#c0c0c0;"></div>
<div class="a" style="left:279px;top:229px;width:1px;height:14px;background:#c0c0c0;"></div>
<div class="t" style="left:304.85px;top:231.37px;font-size:11.5px;font-family:'Liberation Serif',serif;color:#333;font-weight:700;">D</div>
<div class="a" style="left:340px;top:229px;width:1px;height:14px;background:#c8c8c8;"></div>
<div class="t" style="left:490.66px;top:231.37px;font-size:11.5px;font-family:'Liberation Serif',serif;color:#333;font-weight:700;">E</div>
<div class="a" style="left:648px;top:229px;width:1px;height:14px;background:#c8c8c8;"></div>
<div class="t" style="left:681.49px;top:231.37px;font-size:11.5px;font-family:'Liberation Serif',serif;color:#333;font-weight:700;">F</div>
<div class="a" style="left:721px;top:229px;width:1px;height:14px;background:#c8c8c8;"></div>
<div class="t" style="left:753.03px;top:231.37px;font-size:11.5px;font-family:'Liberation Serif',serif;color:#333;font-weight:700;">G</div>
<div class="a" style="left:793px;top:229px;width:1px;height:14px;background:#c8c8c8;"></div>
<div class="t" style="left:825.03px;top:231.37px;font-size:11.5px;font-family:'Liberation Serif',serif;color:#333;font-weight:700;">H</div>
<div class="a" style="left:865px;top:229px;width:1px;height:14px;background:#c8c8c8;"></div>
<div class="t" style="left:899.76px;top:231.37px;font-size:11.5px;font-family:'Liberation Serif',serif;color:#333;font-weight:700;">I</div>
<div class="a" style="left:938px;top:229px;width:1px;height:14px;background:#c8c8c8;"></div>
<div class="t" style="left:971.62px;top:231.37px;font-size:11.5px;font-family:'Liberation Serif',serif;color:#333;font-weight:700;">J</div>
<div class="a" style="left:1010px;top:229px;width:1px;height:14px;background:#c8c8c8;"></div>
<div class="t" style="left:1042.53px;top:231.37px;font-size:11.5px;font-family:'Liberation Serif',serif;color:#333;font-weight:700;">K</div>
<div class="a" style="left:1083px;top:229px;width:1px;height:14px;background:#c8c8c8;"></div>
<div class="t" style="left:1115.66px;top:231.37px;font-size:11.5px;font-family:'Liberation Serif',serif;color:#333;font-weight:700;">L</div>
<div class="a" style="left:1155px;top:229px;width:1px;height:14px;background:#c8c8c8;"></div>
<div class="t" style="left:1209.57px;top:231.37px;font-size:11.5px;font-family:'Liberation Serif',serif;color:#333;font-weight:700;">M</div>
<div class="a" style="left:1274px;top:229px;width:1px;height:14px;background:#c8c8c8;"></div>
<div class="t" style="left:1317.35px;top:231.37px;font-size:11.5px;font-family:'Liberation Serif',serif;color:#333;font-weight:700;">N</div>
<div class="a" style="left:1275px;top:229px;width:93px;height:14px;background:#d2d2d2;"></div>
<div class="t" style="left:1317.35px;top:231.37px;font-size:11.5px;font-family:'Liberation Serif',serif;color:#217346;font-weight:700;">N</div>
<div class="a" style="left:1274px;top:242px;width:95px;height:2px;background:#217346;"></div>
<div class="a" style="left:3px;top:229px;width:14px;height:14px;background:transparent;border:1px solid #a0a0a0"></div>
<div class="a" style="left:17px;top:229px;width:14px;height:14px;background:transparent;border:1px solid #a0a0a0"></div>
<div class="t" style="left:6.94px;top:231.19px;font-size:11px;font-family:'Liberation Sans',sans-serif;color:#666;">1</div>
<div class="t" style="left:20.94px;top:231.19px;font-size:11px;font-family:'Liberation Sans',sans-serif;color:#666;">2</div>
<svg class="a" style="left:47px;top:233px;" width="7" height="7" viewBox="0 0 7 7"><path d="M7 0v7H0z" fill="#b4b4b4"/></svg>
<div class="a" style="left:34px;top:275px;width:23px;height:1px;background:#d0d0d0;"></div>
<div class="t" style="left:39.21px;top:262.77px;font-size:11.5px;font-family:'Liberation Sans',sans-serif;color:#333;">54</div>
<div class="a" style="left:34px;top:293px;width:23px;height:1px;background:#d0d0d0;"></div>
<div class="t" style="left:39.21px;top:280.77px;font-size:11.5px;font-family:'Liberation Sans',sans-serif;color:#333;">55</div>
<div class="a" style="left:34px;top:344px;width:23px;height:1px;background:#d0d0d0;"></div>
<div class="t" style="left:39.21px;top:331.77px;font-size:11.5px;font-family:'Liberation Sans',sans-serif;color:#333;">56</div>
<div class="a" style="left:34px;top:395px;width:23px;height:1px;background:#d0d0d0;"></div>
<div class="t" style="left:39.21px;top:382.77px;font-size:11.5px;font-family:'Liberation Sans',sans-serif;color:#333;">57</div>
<div class="a" style="left:34px;top:446px;width:23px;height:1px;background:#d0d0d0;"></div>
<div class="t" style="left:39.21px;top:433.77px;font-size:11.5px;font-family:'Liberation Sans',sans-serif;color:#333;">58</div>
<div class="a" style="left:34px;top:461px;width:23px;height:1px;background:#d0d0d0;"></div>
<div class="t" style="left:39.21px;top:448.77px;font-size:11.5px;font-family:'Liberation Sans',sans-serif;color:#333;">59</div>
<div class="a" style="left:34px;top:493px;width:23px;height:1px;background:#d0d0d0;"></div>
<div class="a" style="left:35px;top:462px;width:22px;height:31px;background:#d2d2d2;"></div>
<div class="t" style="left:39.21px;top:480.77px;font-size:11.5px;font-family:'Liberation Sans',sans-serif;color:#217346;">60</div>
<div class="a" style="left:34px;top:525px;width:23px;height:1px;background:#d0d0d0;"></div>
<div class="t" style="left:39.21px;top:512.77px;font-size:11.5px;font-family:'Liberation Sans',sans-serif;color:#333;">61</div>
<div class="a" style="left:34px;top:556px;width:23px;height:1px;background:#d0d0d0;"></div>
<div class="t" style="left:39.21px;top:543.77px;font-size:11.5px;font-family:'Liberation Sans',sans-serif;color:#333;">62</div>
<div class="a" style="left:34px;top:580px;width:23px;height:1px;background:#d0d0d0;"></div>
<div class="t" style="left:39.21px;top:567.77px;font-size:11.5px;font-family:'Liberation Sans',sans-serif;color:#333;">63</div>
<div class="a" style="left:34px;top:620px;width:23px;height:1px;background:#d0d0d0;"></div>
<div class="t" style="left:39.21px;top:607.77px;font-size:11.5px;font-family:'Liberation Sans',sans-serif;color:#333;">64</div>
<div class="a" style="left:34px;top:660px;width:23px;height:1px;background:#d0d0d0;"></div>
<div class="t" style="left:39.21px;top:647.77px;font-size:11.5px;font-family:'Liberation Sans',sans-serif;color:#333;">65</div>
<div class="a" style="left:34px;top:699px;width:23px;height:1px;background:#d0d0d0;"></div>
<div class="t" style="left:39.21px;top:686.77px;font-size:11.5px;font-family:'Liberation Sans',sans-serif;color:#333;">66</div>
<div class="a" style="left:56px;top:461px;width:2px;height:33px;background:#217346;"></div>
<div class="a" style="left:57px;top:229px;width:1px;height:476px;background:#bdbdbd;"></div>
<div class="a" style="left:3px;top:447px;width:14px;height:14px;background:#ececec;border:1px solid #a6a6a6"></div>
<div class="a" style="left:6px;top:453px;width:8px;height:2px;background:#666;"></div>
<div class="a" style="left:3px;top:557px;width:14px;height:14px;background:#ececec;border:1px solid #a6a6a6"></div>
<div class="a" style="left:6px;top:563px;width:8px;height:2px;background:#666;"></div>
<div class="a" style="left:7px;top:461px;width:2px;height:94px;background:#a6a6a6;"></div>
<div class="a" style="left:7px;top:553px;width:7px;height:2px;background:#a6a6a6;"></div>
<div class="a" style="left:7px;top:571px;width:2px;height:126px;background:#a6a6a6;"></div>
<div class="a" style="left:7px;top:695px;width:7px;height:2px;background:#a6a6a6;"></div>
<div class="a" style="left:22px;top:478px;width:2px;height:2px;background:#8a8a8a;"></div>
<div class="a" style="left:22px;top:510px;width:2px;height:2px;background:#8a8a8a;"></div>
<div class="a" style="left:22px;top:541px;width:2px;height:2px;background:#8a8a8a;"></div>
<div class="a" style="left:22px;top:602px;width:2px;height:2px;background:#8a8a8a;"></div>
<div class="a" style="left:22px;top:642px;width:2px;height:2px;background:#8a8a8a;"></div>
<div class="a" style="left:22px;top:681px;width:2px;height:2px;background:#8a8a8a;"></div>
<div class="a" style="left:3px;top:702px;width:14px;height:3px;background:#ececec;border:1px solid #a6a6a6;border-bottom:none"></div>
<div class="t" style="left:72.80px;top:252.84px;font-size:13.268px;font-family:'Liberation Serif',serif;color:#111;transform:scaleX(0.9346);transform-origin:0 0;">37</div>
<div class="t" style="left:155.07px;top:252.84px;font-size:13.268px;font-family:'Liberation Serif',serif;color:#111;transform:scaleX(0.9346);transform-origin:0 0;">03. Hop dong</div>
<div class="t" style="left:300.05px;top:252.84px;font-size:13.268px;font-family:'Liberation Serif',serif;color:#111;transform:scaleX(0.9346);transform-origin:0 0;">doc</div>
<div class="t" style="left:343.50px;top:252.84px;font-size:13.268px;font-family:'Liberation Serif',serif;color:#111;transform:scaleX(0.9346);transform-origin:0 0;white-space:pre;">Hợp đồng khảo sát lập KCS dự án Cao tốc</div>
<div class="t" style="left:664.75px;top:252.95px;font-size:14.445px;font-family:'Liberation Serif',serif;color:#2020b0;transform:scaleX(0.9346);transform-origin:0 0;text-decoration:underline;">Mở file</div>
<div class="t" style="left:873.76px;top:252.64px;font-size:13.268px;font-family:'Liberation Serif',serif;color:#111;transform:scaleX(0.9346);transform-origin:0 0;">23/03/2021</div>
<div class="t" style="left:115.94px;top:277.84px;font-size:13.268px;font-family:'Liberation Serif',serif;color:#111;font-weight:700;transform:scaleX(0.9346);transform-origin:0 0;">Khảo sát + Lập KCS Dự án</div>
<div class="t" style="left:421.44px;top:277.84px;font-size:13.268px;font-family:'Liberation Serif',serif;color:#111;font-weight:700;transform:scaleX(0.9346);transform-origin:0 0;">Khảo sát + Lập KCS Dự án</div>
<div class="t" style="left:72.80px;top:311.84px;font-size:13.268px;font-family:'Liberation Serif',serif;color:#111;transform:scaleX(0.9346);transform-origin:0 0;">38</div>
<div class="t" style="left:155.59px;top:311.84px;font-size:13.268px;font-family:'Liberation Serif',serif;color:#111;transform:scaleX(0.9346);transform-origin:0 0;">Du thao KCS</div>
<div class="t" style="left:300.74px;top:311.84px;font-size:13.268px;font-family:'Liberation Serif',serif;color:#111;transform:scaleX(0.9346);transform-origin:0 0;">pdf</div>
<div class="t" style="left:343.50px;top:304.64px;font-size:13.268px;font-family:'Liberation Serif',serif;color:#111;transform:scaleX(0.9346);transform-origin:0 0;white-space:pre;">423   Ban QLDA,ngày 04 5 2021 Văn bản xin ý kiến Khung</div>
<div class="t" style="left:343.50px;top:319.64px;font-size:13.268px;font-family:'Liberation Serif',serif;color:#111;transform:scaleX(0.9346);transform-origin:0 0;white-space:pre;">chính sách gửi UBND tỉnh Cao Bằng</div>
<div class="t" style="left:669.01px;top:315.16px;font-size:10.5px;font-family:'Liberation Sans',sans-serif;color:#3535c8;text-decoration:underline;">Mở file</div>
<div class="t" style="left:741.51px;top:315.16px;font-size:10.5px;font-family:'Liberation Sans',sans-serif;color:#3535c8;text-decoration:underline;">Mở file</div>
<div class="t" style="left:72.80px;top:362.84px;font-size:13.268px;font-family:'Liberation Serif',serif;color:#111;transform:scaleX(0.9346);transform-origin:0 0;">39</div>
<div class="t" style="left:155.59px;top:362.84px;font-size:13.268px;font-family:'Liberation Serif',serif;color:#111;transform:scaleX(0.9346);transform-origin:0 0;">Du thao KCS</div>
<div class="t" style="left:296.95px;top:362.84px;font-size:13.268px;font-family:'Liberation Serif',serif;color:#111;transform:scaleX(0.9346);transform-origin:0 0;">docx</div>
<div class="t" style="left:343.50px;top:363.14px;font-size:13.268px;font-family:'Liberation Serif',serif;color:#111;transform:scaleX(0.9346);transform-origin:0 0;white-space:pre;">Khung chính sách bồi thường, hỗ trợ, tái định cư</div>
<div class="t" style="left:669.01px;top:366.16px;font-size:10.5px;font-family:'Liberation Sans',sans-serif;color:#3535c8;text-decoration:underline;">Mở file</div>
<div class="t" style="left:741.51px;top:366.16px;font-size:10.5px;font-family:'Liberation Sans',sans-serif;color:#3535c8;text-decoration:underline;">Mở file</div>
<div class="t" style="left:72.80px;top:413.84px;font-size:13.268px;font-family:'Liberation Serif',serif;color:#111;transform:scaleX(0.9346);transform-origin:0 0;">40</div>
<div class="t" style="left:155.59px;top:413.84px;font-size:13.268px;font-family:'Liberation Serif',serif;color:#111;transform:scaleX(0.9346);transform-origin:0 0;">Du thao KCS</div>
<div class="t" style="left:300.05px;top:413.84px;font-size:13.268px;font-family:'Liberation Serif',serif;color:#111;transform:scaleX(0.9346);transform-origin:0 0;">doc</div>
<div class="t" style="left:343.50px;top:406.64px;font-size:13.268px;font-family:'Liberation Serif',serif;color:#111;transform:scaleX(0.9346);transform-origin:0 0;white-space:pre;">Dự thảo văn bản UBND tỉnh Cao Bằng gửi UBND tỉnh Lạng</div>
<div class="t" style="left:343.50px;top:421.64px;font-size:13.268px;font-family:'Liberation Serif',serif;color:#111;transform:scaleX(0.9346);transform-origin:0 0;white-space:pre;">Sơn về Khung chính sách (KCS)</div>
<div class="t" style="left:669.01px;top:417.16px;font-size:10.5px;font-family:'Liberation Sans',sans-serif;color:#3535c8;text-decoration:underline;">Mở file</div>
<div class="t" style="left:72.80px;top:470.34px;font-size:13.268px;font-family:'Liberation Serif',serif;color:#111;transform:scaleX(0.9346);transform-origin:0 0;">41</div>
<div class="t" style="left:137.15px;top:470.34px;font-size:13.268px;font-family:'Liberation Serif',serif;color:#111;transform:scaleX(0.9346);transform-origin:0 0;">7 Khung Tieu Chuan</div>
<div class="t" style="left:300.74px;top:470.34px;font-size:13.268px;font-family:'Liberation Serif',serif;color:#111;transform:scaleX(0.9346);transform-origin:0 0;">pdf</div>
<div class="t" style="left:343.50px;top:463.14px;font-size:13.268px;font-family:'Liberation Serif',serif;color:#111;transform:scaleX(0.9346);transform-origin:0 0;white-space:pre;">Tờ trình của Sở GTVT về việc phê duyệt khung tiêu chuẩn</div>
<div class="t" style="left:343.50px;top:478.14px;font-size:13.268px;font-family:'Liberation Serif',serif;color:#111;transform:scaleX(0.9346);transform-origin:0 0;white-space:pre;">dự án</div>
<div class="t" style="left:669.01px;top:473.66px;font-size:10.5px;font-family:'Liberation Sans',sans-serif;color:#3535c8;text-decoration:underline;">Mở file</div>
<div class="t" style="left:72.80px;top:502.34px;font-size:13.268px;font-family:'Liberation Serif',serif;color:#111;transform:scaleX(0.9346);transform-origin:0 0;">42</div>
<div class="t" style="left:137.15px;top:502.34px;font-size:13.268px;font-family:'Liberation Serif',serif;color:#111;transform:scaleX(0.9346);transform-origin:0 0;">7 Khung Tieu Chuan</div>
<div class="t" style="left:300.74px;top:502.34px;font-size:13.268px;font-family:'Liberation Serif',serif;color:#111;transform:scaleX(0.9346);transform-origin:0 0;">pdf</div>
<div class="t" style="left:343.50px;top:495.14px;font-size:13.268px;font-family:'Liberation Serif',serif;color:#111;transform:scaleX(0.9346);transform-origin:0 0;white-space:pre;">Quyết định số 347 của UBND tỉnh Cao Bằng về việc phê</div>
<div class="t" style="left:343.50px;top:510.14px;font-size:13.268px;font-family:'Liberation Serif',serif;color:#111;transform:scaleX(0.9346);transform-origin:0 0;white-space:pre;">duyệt Khung tiêu chuẩn dự án</div>
<div class="t" style="left:669.01px;top:505.66px;font-size:10.5px;font-family:'Liberation Sans',sans-serif;color:#3535c8;text-decoration:underline;">Mở file</div>
<div class="t" style="left:72.80px;top:533.84px;font-size:13.268px;font-family:'Liberation Serif',serif;color:#111;transform:scaleX(0.9346);transform-origin:0 0;">43</div>
<div class="t" style="left:137.15px;top:533.84px;font-size:13.268px;font-family:'Liberation Serif',serif;color:#111;transform:scaleX(0.9346);transform-origin:0 0;">7 Khung Tieu Chuan</div>
<div class="t" style="left:300.74px;top:533.84px;font-size:13.268px;font-family:'Liberation Serif',serif;color:#111;transform:scaleX(0.9346);transform-origin:0 0;">pdf</div>
<div class="t" style="left:343.50px;top:526.64px;font-size:13.268px;font-family:'Liberation Serif',serif;color:#111;transform:scaleX(0.9346);transform-origin:0 0;white-space:pre;">Phụ lục Khung tiêu chuẩn kèm theo Quyết định số 347 của</div>
<div class="t" style="left:343.50px;top:541.64px;font-size:13.268px;font-family:'Liberation Serif',serif;color:#111;transform:scaleX(0.9346);transform-origin:0 0;white-space:pre;">UBND tỉnh Cao Bằng</div>
<div class="t" style="left:669.01px;top:537.16px;font-size:10.5px;font-family:'Liberation Sans',sans-serif;color:#3535c8;text-decoration:underline;">Mở file</div>
<div class="t" style="left:72.80px;top:593.34px;font-size:13.268px;font-family:'Liberation Serif',serif;color:#111;transform:scaleX(0.9346);transform-origin:0 0;">44</div>
<div class="t" style="left:133.15px;top:593.34px;font-size:13.268px;font-family:'Liberation Serif',serif;color:#111;transform:scaleX(0.9346);transform-origin:0 0;">Tham khao Khung TC</div>
<div class="t" style="left:300.74px;top:593.34px;font-size:13.268px;font-family:'Liberation Serif',serif;color:#111;transform:scaleX(0.9346);transform-origin:0 0;">pdf</div>
<div class="t" style="left:343.50px;top:586.14px;font-size:13.268px;font-family:'Liberation Serif',serif;color:#111;transform:scaleX(0.9346);transform-origin:0 0;white-space:pre;">26.09.2011-2114.QD-BGTVT Quyết định phê duyệt Khung</div>
<div class="t" style="left:343.50px;top:601.14px;font-size:13.268px;font-family:'Liberation Serif',serif;color:#111;transform:scaleX(0.9346);transform-origin:0 0;white-space:pre;">tiêu chuẩn hầm đường bộ qua đèo cả</div>
<div class="t" style="left:669.01px;top:596.66px;font-size:10.5px;font-family:'Liberation Sans',sans-serif;color:#3535c8;text-decoration:underline;">Mở file</div>
<div class="t" style="left:72.80px;top:633.34px;font-size:13.268px;font-family:'Liberation Serif',serif;color:#111;transform:scaleX(0.9346);transform-origin:0 0;">45</div>
<div class="t" style="left:133.15px;top:633.34px;font-size:13.268px;font-family:'Liberation Serif',serif;color:#111;transform:scaleX(0.9346);transform-origin:0 0;">Tham khao Khung TC</div>
<div class="t" style="left:297.63px;top:633.34px;font-size:13.268px;font-family:'Liberation Serif',serif;color:#111;transform:scaleX(0.9346);transform-origin:0 0;">PDF</div>
<div class="t" style="left:343.50px;top:626.14px;font-size:13.268px;font-family:'Liberation Serif',serif;color:#111;transform:scaleX(0.9346);transform-origin:0 0;white-space:pre;">Quyết định số 2297- Bổ sung danh mục tiêu chuẩn áp dụng</div>
<div class="t" style="left:343.50px;top:641.14px;font-size:13.268px;font-family:'Liberation Serif',serif;color:#111;transform:scaleX(0.9346);transform-origin:0 0;white-space:pre;">cho đoạn tuyến thuộc cao tốc Bắc nam</div>
<div class="t" style="left:669.01px;top:636.66px;font-size:10.5px;font-family:'Liberation Sans',sans-serif;color:#3535c8;text-decoration:underline;">Mở file</div>
<div class="t" style="left:72.80px;top:672.84px;font-size:13.268px;font-family:'Liberation Serif',serif;color:#111;transform:scaleX(0.9346);transform-origin:0 0;">46</div>
<div class="t" style="left:133.15px;top:672.84px;font-size:13.268px;font-family:'Liberation Serif',serif;color:#111;transform:scaleX(0.9346);transform-origin:0 0;">Tham khao Khung TC</div>
<div class="t" style="left:300.74px;top:672.84px;font-size:13.268px;font-family:'Liberation Serif',serif;color:#111;transform:scaleX(0.9346);transform-origin:0 0;">pdf</div>
<div class="t" style="left:343.50px;top:665.64px;font-size:13.268px;font-family:'Liberation Serif',serif;color:#111;transform:scaleX(0.9346);transform-origin:0 0;white-space:pre;">Quyết định số 977- Danh mục tiêu chuẩn áp dụng cho dự án</div>
<div class="t" style="left:343.50px;top:680.64px;font-size:13.268px;font-family:'Liberation Serif',serif;color:#111;transform:scaleX(0.9346);transform-origin:0 0;white-space:pre;">cao tốc Nghi Sơn - Diễn Châu theo hình thức PPP</div>
<div class="t" style="left:669.01px;top:676.16px;font-size:10.5px;font-family:'Liberation Sans',sans-serif;color:#3535c8;text-decoration:underline;">Mở file</div>
<div class="t" style="left:133.23px;top:447.14px;font-size:13.268px;font-family:'Liberation Serif',serif;color:#111;font-weight:700;transform:scaleX(0.9346);transform-origin:0 0;">7 Khung Tieu Chuan</div>
<div class="t" style="left:343.50px;top:447.14px;font-size:13.268px;font-family:'Liberation Serif',serif;color:#111;font-weight:700;transform:scaleX(0.9346);transform-origin:0 0;white-space:pre;">Khung tiêu chuẩn</div>
<div class="t" style="left:800.74px;top:502.34px;font-size:13.268px;font-family:'Liberation Serif',serif;color:#111;transform:scaleX(0.9346);transform-origin:0 0;">UBND tỉnh</div>
<div class="t" style="left:873.76px;top:502.34px;font-size:13.268px;font-family:'Liberation Serif',serif;color:#111;transform:scaleX(0.9346);transform-origin:0 0;">12/03/2021</div>
<div class="t" style="left:128.64px;top:561.64px;font-size:13.268px;font-family:'Liberation Serif',serif;color:#111;font-weight:700;transform:scaleX(0.9346);transform-origin:0 0;">Tham khao Khung TC</div>
<div class="t" style="left:343.50px;top:561.64px;font-size:13.268px;font-family:'Liberation Serif',serif;color:#111;font-weight:700;transform:scaleX(0.9346);transform-origin:0 0;white-space:pre;">Tham khảo Khung tiêu chuẩn dự án khác</div>
<div class="a" style="left:1274px;top:294px;width:94px;height:50px;overflow:hidden"><div class="t" style="left:3.50px;top:-3.88px;font-size:12.4px;font-family:'Liberation Serif',serif;color:#111;">G:\1.</div><div class="t" style="left:3.50px;top:11.12px;font-size:12.4px;font-family:'Liberation Serif',serif;color:#111;">TOANLAM\Dro</div><div class="t" style="left:3.50px;top:26.12px;font-size:12.4px;font-family:'Liberation Serif',serif;color:#111;">pbox\1 CAO</div><div class="t" style="left:3.50px;top:41.12px;font-size:12.4px;font-family:'Liberation Serif',serif;color:#111;">TOC\1.Chuan.bi</div></div>
<div class="a" style="left:1274px;top:345px;width:94px;height:50px;overflow:hidden"><div class="t" style="left:3.50px;top:-3.88px;font-size:12.4px;font-family:'Liberation Serif',serif;color:#111;">G:\1.</div><div class="t" style="left:3.50px;top:11.12px;font-size:12.4px;font-family:'Liberation Serif',serif;color:#111;">TOANLAM\Dro</div><div class="t" style="left:3.50px;top:26.12px;font-size:12.4px;font-family:'Liberation Serif',serif;color:#111;">pbox\1 CAO</div><div class="t" style="left:3.50px;top:41.12px;font-size:12.4px;font-family:'Liberation Serif',serif;color:#111;">TOC\1.Chuan.bi</div></div>
<div class="a" style="left:1274px;top:396px;width:94px;height:50px;overflow:hidden"><div class="t" style="left:3.50px;top:-3.88px;font-size:12.4px;font-family:'Liberation Serif',serif;color:#111;">G:\1.</div><div class="t" style="left:3.50px;top:11.12px;font-size:12.4px;font-family:'Liberation Serif',serif;color:#111;">TOANLAM\Dro</div><div class="t" style="left:3.50px;top:26.12px;font-size:12.4px;font-family:'Liberation Serif',serif;color:#111;">pbox\1 CAO</div><div class="t" style="left:3.50px;top:41.12px;font-size:12.4px;font-family:'Liberation Serif',serif;color:#111;">TOC\1.Chuan.bi</div></div>
<div class="a" style="left:1274px;top:557px;width:94px;height:23px;overflow:hidden"><div class="t" style="left:3.50px;top:5.62px;font-size:12.4px;font-family:'Liberation Serif',serif;color:#111;font-weight:700;">G:\1. TOANLAM\Dropbox</div></div>
<div class="a" style="left:1274px;top:581px;width:94px;height:39px;overflow:hidden"><div class="t" style="left:3.50px;top:13.62px;font-size:12.4px;font-family:'Liberation Serif',serif;color:#111;">G:\1. TOANLAM\Dropbox</div></div>
<div class="a" style="left:1274px;top:621px;width:94px;height:39px;overflow:hidden"><div class="t" style="left:3.50px;top:13.62px;font-size:12.4px;font-family:'Liberation Serif',serif;color:#111;">G:\1. TOANLAM\Dropbox</div></div>
<div class="a" style="left:1274px;top:661px;width:94px;height:38px;overflow:hidden"><div class="t" style="left:3.50px;top:13.12px;font-size:12.4px;font-family:'Liberation Serif',serif;color:#111;">G:\1. TOANLAM\Dropbox</div></div>
<div class="a" style="left:1273px;top:460px;width:96px;height:34px;background:transparent;border:2px solid #217346"></div>
<div class="a" style="left:1365px;top:490px;width:5px;height:5px;background:#217346;border:1px solid #fff"></div>
<div class="a" style="left:1369px;top:229px;width:24px;height:476px;background:#e8e8e8;"></div>
<div class="a" style="left:1375px;top:231px;width:15px;height:15px;background:#fff;border:1px solid #cfcfcf"></div>
<svg class="a" style="left:1378px;top:235px;" width="9" height="6" viewBox="0 0 9 6"><path d="M0.5 5L4.5 1 8.5 5z" fill="#666"/></svg>
<div class="a" style="left:1375px;top:691px;width:15px;height:14px;background:#fff;border:1px solid #cfcfcf"></div>
<svg class="a" style="left:1378px;top:695px;" width="9" height="6" viewBox="0 0 9 6"><path d="M0.5 1L4.5 5 8.5 1z" fill="#666"/></svg>
<div class="a" style="left:1376px;top:574px;width:13px;height:66px;background:#fff;border:1px solid #d4d4d4"></div>
<div class="a" style="left:1px;top:705px;width:1392px;height:30px;background:#e6e6e6;"></div>
<div class="a" style="left:1px;top:704px;width:1392px;height:1px;background:#c6c6c6;"></div>
<svg class="a" style="left:28px;top:713px;" width="6" height="10" viewBox="0 0 6 10"><path d="M5 0.5L0.5 5 5 9.5z" fill="#c4c4c4"/></svg>
<svg class="a" style="left:58px;top:713px;" width="6" height="10" viewBox="0 0 6 10"><path d="M0.5 0.5L5 5 0.5 9.5z" fill="#1f6b3f"/></svg>
<div class="a" style="left:102px;top:710px;width:1px;height:18px;background:#a8a8a8;"></div>
<div class="a" style="left:106px;top:707px;width:72px;height:23px;background:#12b3ee;"></div>
<div class="a" style="left:103px;top:709px;width:1px;height:19px;background:#b4b4b4;"></div>
<div class="a" style="left:182px;top:707px;width:166px;height:23px;background:#1b8ff2;"></div>
<div class="a" style="left:179px;top:709px;width:1px;height:19px;background:#b4b4b4;"></div>
<div class="a" style="left:352px;top:707px;width:68px;height:23px;background:#92d050;"></div>
<div class="a" style="left:349px;top:709px;width:1px;height:19px;background:#b4b4b4;"></div>
<div class="a" style="left:426px;top:707px;width:104px;height:23px;background:#92d050;"></div>
<div class="a" style="left:423px;top:709px;width:1px;height:19px;background:#b4b4b4;"></div>
<div class="a" style="left:535px;top:707px;width:149px;height:23px;background:#fb7820;"></div>
<div class="a" style="left:532px;top:709px;width:1px;height:19px;background:#b4b4b4;"></div>
<div class="a" style="left:689px;top:707px;width:104px;height:23px;background:#92d050;"></div>
<div class="a" style="left:686px;top:709px;width:1px;height:19px;background:#b4b4b4;"></div>
<div class="a" style="left:796px;top:707px;width:112px;height:23px;background:#92d050;"></div>
<div class="a" style="left:793px;top:709px;width:1px;height:19px;background:#b4b4b4;"></div>
<div class="a" style="left:912px;top:707px;width:112px;height:23px;background:#92d050;"></div>
<div class="a" style="left:909px;top:709px;width:1px;height:19px;background:#b4b4b4;"></div>
<div class="t" style="left:117.00px;top:711.30px;font-size:13px;font-family:'Liberation Sans',sans-serif;color:#17384f;transform:scaleX(1.0324);transform-origin:0 0;">Van ban</div>
<div class="t" style="left:198.50px;top:711.30px;font-size:13px;font-family:'Liberation Sans',sans-serif;color:#eef7ff;transform:scaleX(0.9636);transform-origin:0 0;">TaiLieuChungBanQLDA</div>
<div class="t" style="left:364.00px;top:711.30px;font-size:13px;font-family:'Liberation Sans',sans-serif;color:#16300f;transform:scaleX(0.9581);transform-origin:0 0;">SA BAN</div>
<div class="t" style="left:437.85px;top:711.30px;font-size:13px;font-family:'Liberation Sans',sans-serif;color:#16300f;transform:scaleX(0.9333);transform-origin:0 0;">PA KIENTRUC</div>
<div class="t" style="left:549.90px;top:711.30px;font-size:13px;font-family:'Liberation Sans',sans-serif;color:#fff2e6;transform:scaleX(0.9469);transform-origin:0 0;">NAPONG-DUCHANH</div>
<div class="t" style="left:700.75px;top:711.30px;font-size:13px;font-family:'Liberation Sans',sans-serif;color:#16300f;transform:scaleX(0.9466);transform-origin:0 0;">DOONGLENG</div>
<div class="t" style="left:810.10px;top:711.30px;font-size:13px;font-family:'Liberation Sans',sans-serif;color:#16300f;transform:scaleX(0.9037);transform-origin:0 0;">CAOTOC-VBPL</div>
<div class="t" style="left:924.75px;top:711.30px;font-size:13px;font-family:'Liberation Sans',sans-serif;color:#16300f;transform:scaleX(0.9125);transform-origin:0 0;">CT-KS BCNCKT</div>
<div class="a" style="left:1027px;top:705px;width:141px;height:24px;background:linear-gradient(#ffffff,#e7f2d8);"></div>
<div class="a" style="left:1027px;top:728px;width:141px;height:2px;background:#3f6e58;"></div>
<div class="a" style="left:1167px;top:707px;width:1px;height:22px;background:#9ab59f;"></div>
<div class="t" style="left:1037.50px;top:711.30px;font-size:13px;font-family:'Liberation Sans',sans-serif;color:#2f6b55;font-weight:700;transform:scaleX(1.0172);transform-origin:0 0;">CaoToc-Tuvankhac</div>
<div class="a" style="left:1172px;top:707px;width:57px;height:23px;background:#00b050;"></div>
<div class="a" style="left:1172px;top:707px;width:57px;height:23px;overflow:hidden"><div class="t" style="left:12.00px;top:4.30px;font-size:13px;font-family:'Liberation Sans',sans-serif;color:#0f3a1c;transform:scaleX(1.0849);transform-origin:0 0;">Quy trình</div></div>
<div class="t" style="left:1238.00px;top:712.00px;font-size:13px;font-family:'Liberation Sans',sans-serif;color:#444;font-weight:700;">...</div>
<svg class="a" style="left:1262px;top:710px;" width="17" height="17" viewBox="0 0 17 17"><circle cx="8.5" cy="8.5" r="7.5" fill="none" stroke="#777" stroke-width="1.2"/><path d="M8.5 4v9M4 8.5h9" stroke="#666" stroke-width="1.5"/></svg>
<div class="a" style="left:1299.5px;top:713px;width:1.5px;height:1.5px;background:#b0b0b0;"></div>
<div class="a" style="left:1299.5px;top:718px;width:1.5px;height:1.5px;background:#b0b0b0;"></div>
<div class="a" style="left:1299.5px;top:723px;width:1.5px;height:1.5px;background:#b0b0b0;"></div>
<div class="a" style="left:1316px;top:712px;width:16px;height:15px;background:#fff;border:1px solid #c8c8c8"></div>
<div class="a" style="left:1331px;top:712px;width:22px;height:15px;background:#fff;border:1px solid #c8c8c8"></div>
<div class="a" style="left:1356px;top:712px;width:16px;height:15px;background:#fff;border:1px solid #c8c8c8"></div>
<svg class="a" style="left:1321px;top:715px;" width="5" height="9" viewBox="0 0 5 9"><path d="M4.5 0.5L0.5 4.5 4.5 8.5z" fill="#555"/></svg>
<svg class="a" style="left:1362px;top:715px;" width="5" height="9" viewBox="0 0 5 9"><path d="M0.5 0.5L4.5 4.5 0.5 8.5z" fill="#555"/></svg>
<div class="a" style="left:1px;top:733px;width:1392px;height:22px;background:#f1f1f1;"></div>
<div class="a" style="left:1px;top:733px;width:1392px;height:1px;background:#d2d2d2;"></div>
<div class="t" style="left:8.80px;top:737.84px;font-size:12px;font-family:'Liberation Sans',sans-serif;color:#555;transform:scaleX(0.8851);transform-origin:0 0;">Ready</div>
<div class="a" style="left:1096px;top:734px;width:38px;height:21px;background:#d6d6d6;"></div>
<svg class="a" style="left:1106px;top:738px;" width="17" height="13" viewBox="0 0 17 13"><path d="M0.5 0.5h16v12h-16zM0.5 4.5h16M0.5 8.5h16M6 0.5v12M11 0.5v12" fill="none" stroke="#666" stroke-width="1"/></svg>
<svg class="a" style="left:1145px;top:738px;" width="16" height="14" viewBox="0 0 16 14"><path d="M0.5 0.5h15v13h-15z" fill="none" stroke="#777"/><path d="M3.5 3.5h9v7h-9zM3.5 6h9M3.5 8.5h9" fill="none" stroke="#777"/></svg>
<svg class="a" style="left:1184px;top:737px;" width="16" height="15" viewBox="0 0 16 15"><path d="M0.5 0.5h15v14h-15z" fill="none" stroke="#777"/><path d="M6.5 0.5v6h3v-6" fill="none" stroke="#777"/></svg>
<div class="a" style="left:1217px;top:744px;width:6px;height:2px;background:#555;"></div>
<div class="a" style="left:1228px;top:744px;width:100px;height:1px;background:#a8a8a8;"></div>
<div class="a" style="left:1260px;top:737px;width:4px;height:13px;background:#666;"></div>
<div class="a" style="left:1277px;top:741px;width:1px;height:7px;background:#a8a8a8;"></div>
<svg class="a" style="left:1332px;top:739px;" width="11" height="11" viewBox="0 0 11 11"><path d="M5.5 0v11M0 5.5h11" stroke="#555" stroke-width="2"/></svg>
<div class="t" style="left:1356.00px;top:737.84px;font-size:12px;font-family:'Liberation Sans',sans-serif;color:#555;transform:scaleX(0.8577);transform-origin:0 0;">70%</div>
<div class="a" style="left:0px;top:755px;width:1389px;height:40px;background:#0b3150;"></div>
<div class="a" style="left:1389px;top:755px;width:4px;height:40px;background:#0b3150;"></div>
<div class="a" style="left:1388px;top:757px;width:1px;height:37px;background:#4a6f8e;"></div>
<div class="a" style="left:0px;top:795px;width:1398px;height:3px;background:#404246;"></div>
<div class="a" style="left:250px;top:755px;width:50px;height:40px;background:#134c84;"></div>
<div class="a" style="left:250px;top:793px;width:50px;height:2px;background:#a9d0f2;"></div>
<div class="a" style="left:205px;top:793px;width:41px;height:1.5px;background:#86a9c6;"></div>
<div class="a" style="left:304px;top:793px;width:41px;height:1.5px;background:#86a9c6;"></div>
<div class="a" style="left:354px;top:793px;width:41px;height:1.5px;background:#86a9c6;"></div>
<div class="a" style="left:404px;top:793px;width:41px;height:1.5px;background:#86a9c6;"></div>
<div class="a" style="left:454px;top:793px;width:41px;height:1.5px;background:#86a9c6;"></div>
<div class="a" style="left:504px;top:793px;width:42px;height:1.5px;background:#86a9c6;"></div>
<svg class="a" style="left:17px;top:767px;" width="17" height="17" viewBox="0 0 17 17"><path d="M0 2.4L7 1.4V8H0zM8 1.2L17 0v8H8zM0 9h7v6.6L0 14.6zM8 9h9v8L8 15.8z" fill="#fff"/></svg>
<svg class="a" style="left:65px;top:767px;" width="18" height="18" viewBox="0 0 18 18"><circle cx="11" cy="7" r="5.6" fill="none" stroke="#e6eef5" stroke-width="1.6"/><path d="M7 11L1 17" stroke="#e6eef5" stroke-width="1.8"/></svg>
<svg class="a" style="left:114px;top:766px;" width="22" height="19" viewBox="0 0 22 19"><path d="M0 1h8l2 2h12v16H0z" fill="#f3c94c"/><path d="M0 5h22v14H0z" fill="#f9dc6e"/><path d="M5 12h12v7h-3v-4H8v4H5z" fill="#2aa4e8"/></svg>
<svg class="a" style="left:163px;top:766px;" width="24" height="20" viewBox="0 0 24 20"><rect x="0.5" y="0.5" width="10.5" height="9" rx="1" fill="#f2f2f2" stroke="#c9c9c9" stroke-width="0.8"/><rect x="12.5" y="0.5" width="10.5" height="9" rx="1" fill="#f2f2f2" stroke="#c9c9c9" stroke-width="0.8"/><rect x="6.5" y="10" width="10.5" height="9.5" rx="1" fill="#f2f2f2" stroke="#c9c9c9" stroke-width="0.8"/><text x="3" y="7.3" font-size="6.5" fill="#c22" font-weight="700" font-family="Liberation Sans">M</text><text x="16" y="7.3" font-size="6.5" fill="#c22" font-weight="700" font-family="Liberation Sans">L</text><text x="9.5" y="17" font-size="6.5" fill="#c22" font-weight="700" font-family="Liberation Sans">R</text></svg>
<svg class="a" style="left:213px;top:763px;" width="26" height="25" viewBox="0 0 26 25"><defs><linearGradient id="eg" x1="0" y1="0" x2="0.6" y2="1"><stop offset="0" stop-color="#2a9be8"/><stop offset="1" stop-color="#0d57b8"/></linearGradient><linearGradient id="eg2" x1="0" y1="0" x2="1" y2="0.4"><stop offset="0" stop-color="#3ab4e6"/><stop offset="0.6" stop-color="#36c8b0"/><stop offset="1" stop-color="#6fdc50"/></linearGradient></defs><circle cx="12.5" cy="12.5" r="12.2" fill="url(#eg)"/><path d="M1.2 10C2.5 4 7.5 0.4 12.8 0.4 19.5 0.4 24.8 5.5 24.8 11.5c0 4.5-3.5 7-7.5 7-3.2 0-5.6-1.8-5.6-4 0-1.8 1.6-3.2 3.6-3.2C11.5 8.5 5 8 1.2 10z" fill="url(#eg2)"/><ellipse cx="13.2" cy="14.6" rx="3.3" ry="3.1" fill="#0b3150"/><path d="M3 18c2 4 6 6.5 10 6.5" fill="none" stroke="#1466c8" stroke-width="2" opacity="0.6"/></svg>
<svg class="a" style="left:264px;top:764px;" width="23" height="22" viewBox="0 0 23 22"><rect x="9" y="2" width="13" height="18" fill="#fff" stroke="#1e7145" stroke-width="1"/><path d="M12 5h8M12 8h8M12 11h8M12 14h8M12 17h8M16 3v16" stroke="#1e7145" stroke-width="0.8"/><path d="M0 3l12-2v20L0 19z" fill="#1e7145"/><text x="2.3" y="15" font-size="10" font-weight="700" fill="#fff" font-family="Liberation Sans">X</text></svg>
<svg class="a" style="left:313px;top:763px;" width="25" height="25" viewBox="0 0 25 25"><rect x="0.5" y="0.5" width="24" height="24" rx="2" fill="#c9d4ee" stroke="#8aa0cf"/><rect x="3" y="3" width="19" height="19" fill="#f6f7fb"/><path d="M4 20c6-2 12-8 16-16" stroke="#f08a1c" stroke-width="3" fill="none"/><path d="M4 17c4-3 9-9 11-13" stroke="#b5c4e6" stroke-width="1.5" fill="none"/></svg>
<svg class="a" style="left:364px;top:764px;" width="22" height="22" viewBox="0 0 22 22"><rect x="9" y="2" width="12" height="18" fill="#fff"/><path d="M11 5h9M11 8h9M11 11h9M11 14h9M11 17h9" stroke="#2b5797" stroke-width="1"/><path d="M0 3l12-2v20L0 19z" fill="#2b5797"/><text x="1" y="15" font-size="9.5" font-weight="700" fill="#fff" font-family="Liberation Sans">W</text></svg>
<svg class="a" style="left:412px;top:762px;" width="28" height="27" viewBox="0 0 28 27"><path d="M12 1c6.5 0 11.5 4.5 11.5 10.5S18.5 22 12 22c-1.5 0-3-.2-4.3-.7L3 24l1-4.5C2 17.5 0.5 14.7 0.5 11.5 0.5 5.5 5.5 1 12 1z" fill="#fff"/><path d="M5 11h4l-4 5h4" stroke="#1d7fe0" stroke-width="1.4" fill="none"/><text x="10" y="15" font-size="6" fill="#1d7fe0" font-family="Liberation Sans" font-weight="700">alo</text><circle cx="19.5" cy="20" r="6.8" fill="#e5181e"/><text x="17" y="23.5" font-size="9" fill="#fff" font-family="Liberation Sans" font-weight="700">1</text></svg>
<svg class="a" style="left:463px;top:762px;" width="24" height="25" viewBox="0 0 24 25"><path d="M12 4a8.5 8.5 0 1 0 8 11h-5a4 4 0 0 1-6.5-2.5H20.5A8.5 8.5 0 0 0 12 4zm-3.3 6.5a3.8 3.8 0 0 1 7 0z" fill="#27a9e6" fill-rule="evenodd"/><path d="M2 22c-2-3 3-12 10-16s11-4 11-1-3 7-5 9" fill="none" stroke="#f2c12e" stroke-width="1.8"/></svg>
<svg class="a" style="left:511px;top:762px;" width="26" height="26" viewBox="0 0 26 26"><ellipse cx="11" cy="15" rx="10.5" ry="8" fill="#eee6d8"/><circle cx="6" cy="13" r="2" fill="#e34b3c"/><circle cx="10" cy="10" r="2" fill="#f0c33c"/><circle cx="15" cy="11" r="2" fill="#3a9ad9"/><circle cx="6" cy="18" r="2" fill="#55b04f"/><ellipse cx="12" cy="19" rx="2.5" ry="1.8" fill="#0b3150"/><path d="M14 22L24 2" stroke="#d9a35a" stroke-width="2.5"/><path d="M22 2l3 1-2 3z" fill="#e07a2c"/></svg>
<svg class="a" style="left:1154px;top:771px;" width="14" height="9" viewBox="0 0 14 9"><path d="M1 8l6-6 6 6" fill="none" stroke="#dfe7ee" stroke-width="1.6"/></svg>
<svg class="a" style="left:1177px;top:767px;" width="17" height="17" viewBox="0 0 17 17"><rect x="0" y="0" width="17" height="17" fill="#f2c6c6"/><path d="M3 3l5.5 11L14 3" fill="none" stroke="#c31d1d" stroke-width="2.4"/></svg>
<svg class="a" style="left:1201px;top:767px;" width="18" height="17" viewBox="0 0 18 17"><rect x="4.5" y="2.5" width="13" height="9" fill="none" stroke="#e4ecf2" stroke-width="1.2"/><path d="M11 11.5v3M7 15h8" stroke="#e4ecf2" stroke-width="1.2"/><rect x="0.5" y="0.5" width="5" height="5" fill="#0b3150" stroke="#e4ecf2" stroke-width="1"/><path d="M3 5.5v10M1 15.5h5" stroke="#e4ecf2" stroke-width="1"/></svg>
<svg class="a" style="left:1226px;top:769px;" width="17" height="14" viewBox="0 0 17 14"><path d="M0.6 4.5h3.2L8 0.8v12.4L3.8 9.5H0.6z" fill="none" stroke="#e4ecf2" stroke-width="1.2"/><path d="M10.5 4.5c1 1.5 1 3.5 0 5M13 2.5c2 2.5 2 6.5 0 9M15.3 1c2.5 3.5 2.5 8.5 0 12" fill="none" stroke="#a9bccb" stroke-width="1.1"/></svg>
<svg class="a" style="left:1250px;top:767px;" width="18" height="18" viewBox="0 0 18 18"><path d="M0.5 0.5h17v12H10l-2 4-2-4H0.5z" fill="#fff"/><path d="M3.5 4h11M3.5 6.8h11M3.5 9.5h7" stroke="#0b3150" stroke-width="1.2"/></svg>
<div class="t" style="left:1277.00px;top:769.34px;font-size:12px;font-family:'Liberation Sans',sans-serif;color:#e8eff5;transform:scaleX(0.8845);transform-origin:0 0;">ENG</div>
<div class="t" style="left:1325.40px;top:760.14px;font-size:12px;font-family:'Liberation Sans',sans-serif;color:#e8eff5;transform:scaleX(0.9623);transform-origin:0 0;">4:49 PM</div>
<div class="t" style="left:1318.60px;top:777.64px;font-size:12px;font-family:'Liberation Sans',sans-serif;color:#e8eff5;transform:scaleX(0.9525);transform-origin:0 0;">13/05/2021</div>
<div class="a" style="left:93px;top:691px;width:1140px;height:47px;background:transparent;border:3px solid #c8161c;border-radius:7px"></div>
</body></html>
